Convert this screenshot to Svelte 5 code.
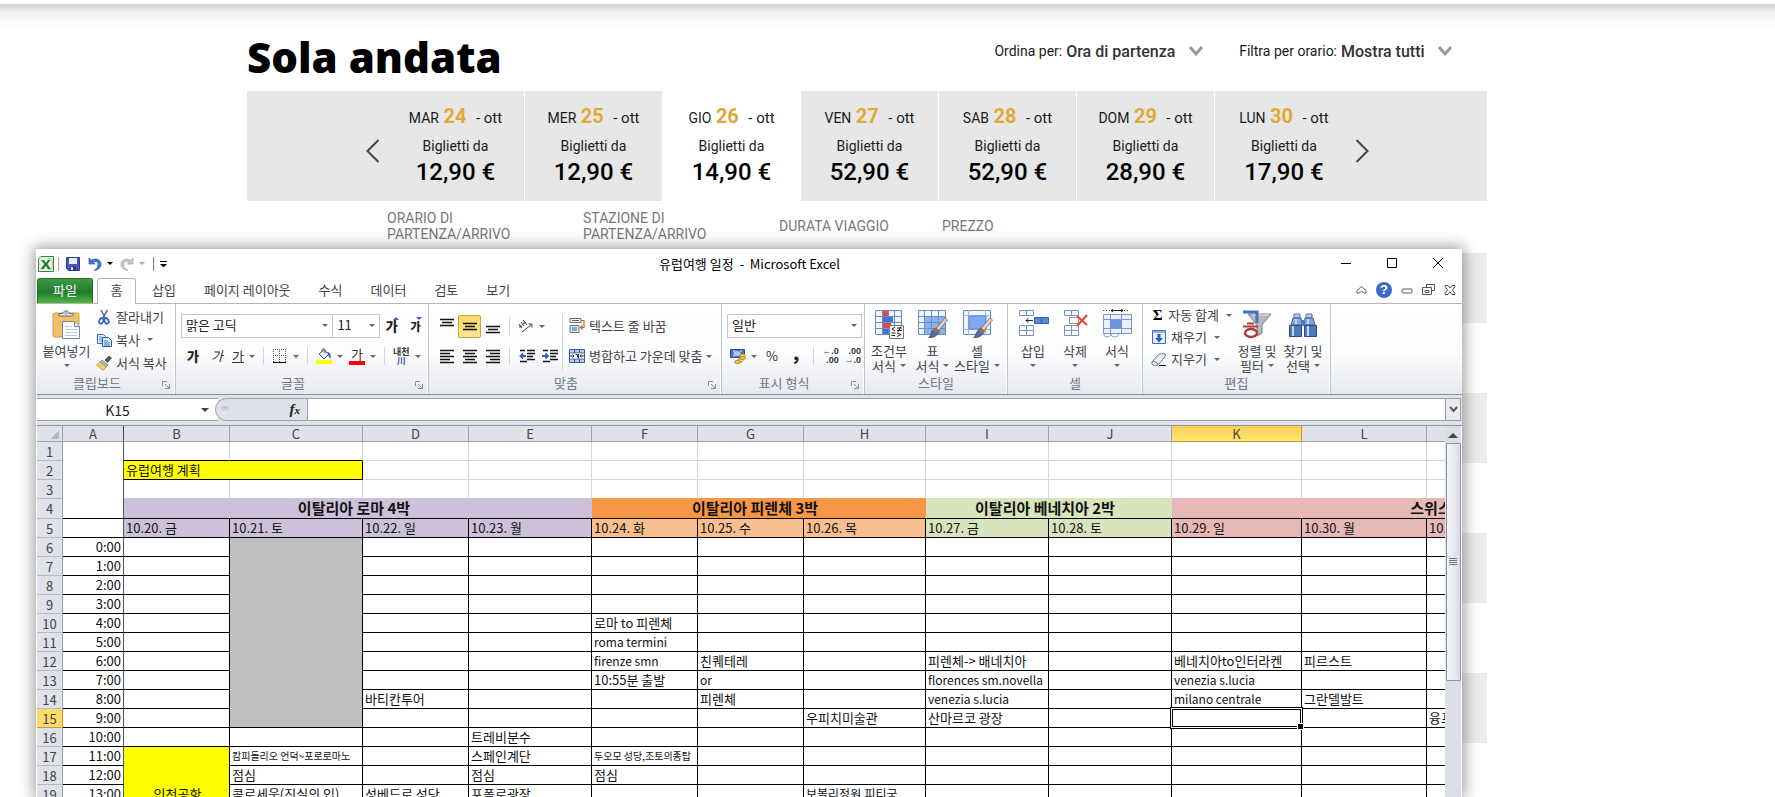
<script>
  const days = [
    { name: 'MAR', num: 24, price: '12,90 €' },
    { name: 'MER', num: 25, price: '12,90 €' },
    { name: 'GIO', num: 26, price: '14,90 €', active: true },
    { name: 'VEN', num: 27, price: '52,90 €' },
    { name: 'SAB', num: 28, price: '52,90 €' },
    { name: 'DOM', num: 29, price: '28,90 €' },
    { name: 'LUN', num: 30, price: '17,90 €' }
  ];

  const tabs = ['삽입', '페이지 레이아웃', '수식', '데이터', '검토', '보기'];

  const columns = [
    ['A', 61], ['B', 106], ['C', 133], ['D', 106], ['E', 123], ['F', 106], ['G', 106],
    ['H', 122], ['I', 123], ['J', 123], ['K', 130], ['L', 125], ['M', 271]
  ];
  const letters = columns.map((c) => c[0]).slice(1);

  const zone = (c) => ('BCDE'.includes(c) ? 'rome' : 'FGH'.includes(c) ? 'florence' : 'IJ'.includes(c) ? 'venice' : 'swiss');

  const dates = {
    B: '10.20. 금', C: '10.21. 토', D: '10.22. 일', E: '10.23. 월', F: '10.24. 화', G: '10.25. 수',
    H: '10.26. 목', I: '10.27. 금', J: '10.28. 토', K: '10.29. 일', L: '10.30. 월', M: '10.31. 화'
  };

  const notes = {
    F10: '로마 to 피렌체', F11: 'roma termini', F12: 'firenze smn', F13: '10:55분 출발',
    G12: '친퀘테레', G13: 'or', G14: '피렌체',
    I12: '피렌체-> 배네치아', I13: 'florences sm.novella', I14: 'venezia s.lucia', I15: '산마르코 광장',
    K12: '베네치아to인터라켄', K13: 'venezia s.lucia', K14: 'milano centrale',
    L12: '피르스트', L14: '그란델발트', M15: '융프라우',
    D14: '바티칸투어', H15: '우피치미술관',
    E16: '트레비분수', E17: '스페인계단', E18: '점심', E19: '포폴로광장',
    C17: '캄피돌리오 언덕~포로로마노', C18: '점심', C19: '콜로세움(진실의 입)',
    D19: '성베드로 성당', F17: '두오모 성당,조토의종탑', F18: '점심', H19: '보볼리정원,피티궁'
  };
  const shrunk = ['C17', 'F17'];
  const condensed = ['H19', 'F11', 'F12', 'G13', 'I13', 'I14', 'K13', 'K14'];

  const hours = Array.from({ length: 16 }, (_, i) => i + 6);

  // Grey block covers C6:C15, yellow block covers B17:B21.
  const covered = (c, r) => (c === 'C' && r > 6 && r < 16) || (c === 'B' && r > 17);
</script>

{#snippet icon(name, size = 16)}
  <svg class="icon" width={size} height={size} viewBox="0 0 {size} {size}" aria-hidden="true">
    {#if name === 'excel'}
      <path d="M3 .5h12.5v15H.5V3z" fill="#e4f3df" stroke="#2c8a3c" />
      <path d="M10 3h4v10h-4z" fill="#fff" stroke="#7fbf86" stroke-width=".7" />
      <path d="M3 4h3l2 3 2-3h2.6L9.3 8l3.6 5H10L7.8 9.8 5.6 13H2.6l3.8-5z" fill="#1e7c34" />
    {:else if name === 'save'}
      <path d="M1.5 1.5h13v13h-11l-2-2z" fill="#4a55b5" stroke="#2f3992" />
      <path d="M4 2h8v6H4z" fill="#e8edfb" /><path d="M5 10.500h6v4H5z" fill="#2c3480" /><path d="M6 11h2v3H6z" fill="#dfe5f7" />
    {:else if name === 'undo'}
      <path d="M2 2v6h6L6 6.200C9 4.500 11 6 11 8.500S9.500 13 7 14.500C12 14 14 11 14 8.200 14 3.500 8.500 1.500 4.200 4.300z" fill="#4a72cf" stroke="#2d51a8" stroke-width=".7" />
    {:else if name === 'redo'}
      <path d="M14 2v6H8l2-1.800C7 4.500 5 6 5 8.500S6.500 13 9 14.500C4 14 2 11 2 8.200 2 3.500 7.500 1.500 11.800 4.300z" fill="#c6c8cc" stroke="#a2a5aa" stroke-width=".7" />
    {:else if name === 'cut'}
      <path d="M5 1l4.500 8.500M11.500 1L6.500 9.500" stroke="#5c708f" stroke-width="1.600" fill="none" />
      <ellipse cx="5.300" cy="12" rx="2" ry="2.800" transform="rotate(25 5.300 12)" fill="none" stroke="#2f62b8" stroke-width="1.700" />
      <ellipse cx="10.500" cy="12" rx="2" ry="2.800" transform="rotate(-25 10.500 12)" fill="none" stroke="#2f62b8" stroke-width="1.700" />
    {:else if name === 'copy'}
      <path d="M1.500 2.500h6l2 2v7h-8z" fill="#eaf2fd" stroke="#3b6ab5" /><path d="M3 5h3M3 7h4M3 9h4" stroke="#5c8bd0" />
      <path d="M6.500 5.500h6l3 3v6h-9z" fill="#dceafc" stroke="#2a56a2" /><path d="M8 9h4M8 11h6M8 13h6" stroke="#3f72c2" />
    {:else if name === 'brush'}
      <path d="M9 5l4-4 2.500 2-4 4.500z" fill="#5e5247" stroke="#3f352d" stroke-width=".6" />
      <path d="M6 5l6 5-2 2-6-5z" fill="#a9b6cb" stroke="#66748c" stroke-width=".6" />
      <path d="M4 7l6 5-3 3.500L.500 10z" fill="#f3cf6a" stroke="#b98b2b" stroke-width=".8" />
    {:else if name === 'border'}
      <path d="M1.500 1v13M7.500 1v13M13.500 1v13M1 1.500h13M1 7.500h13" stroke="#555" stroke-dasharray="1 1" fill="none" />
      <path d="M1 14.500h13" stroke="#000" />
    {:else if name === 'fill'}
      <path d="M3 6l5-4 5 4-5 5z" fill="#e4eaf3" stroke="#4a5a74" /><path d="M6 4V1.500c1-1.500 3-1 3 .500v3" fill="none" stroke="#4a5a74" />
      <path d="M11 4c4 0 4 4 3.500 7-1-1-2-3-2.500-5z" fill="#2f62c0" /><path d="M0 12h16v4H0z" fill="#ff0" />
    {:else if name === 'wrap'}
      <path d="M1 .500h11v4H1z" fill="#fff" stroke="#666" /><path d="M3 2.500h7" stroke="#555" />
      <path d="M1 7.500h9v7H1z" fill="#dbe7f8" stroke="#5476ad" /><path d="M3 10h5M3 12h5" stroke="#4c5f80" />
      <path d="M12 2.500h3v7h-3M13.500 7.500l-2 2 2 2" fill="none" stroke="#c06722" stroke-width="1.200" />
    {:else if name === 'merge'}
      <path d="M.500 1.500h15v13H.500z" fill="#b9cdec" stroke="#3d5a8d" /><path d="M.500 5h15M.500 11h15M5.500 1v4M10.500 1v4M5.500 11v4M10.500 11v4" stroke="#3d5a8d" />
      <path d="M1 5.500h14v5H1z" fill="#fff" /><path d="M1 8h4M11 8h4M3.500 6.500L5 8 3.500 9.500M12.500 6.500L11 8l1.500 1.500M6.500 6.500h2v3M9.500 6v4.500" stroke="#333" fill="none" />
    {:else if name === 'orient'}
      <path d="M1 6l3 4M3 4l3 4M5 2l4 5M1 9l3-1M5 5.500l3-1" stroke="#555" fill="none" stroke-width="1.200" />
      <path d="M4 14L13.500 6.500M10.500 6h3.500v3.500" stroke="#444" fill="none" />
    {:else if name === 'outdent' || name === 'indent'}
      <path d="M8 2.500h8M8 5.500h8M8 8.500h6M8 11.500h8M1 2.500h5M1 13.500h7" stroke="#111" stroke-width="1.500" />
      <path d={name === 'outdent' ? 'M7 8H2M4 5.500L1.500 8 4 10.500' : 'M0 8h5M3.500 5.500L6 8 3.500 10.500'} stroke="#2f62c0" stroke-width="1.800" fill="none" />
    {:else if name === 'money'}
      <path d="M.500 1.500h14v8H.500z" fill="#4a74c4" stroke="#274a90" /><ellipse cx="7" cy="5.500" rx="3.500" ry="2.500" fill="#b6cbf2" />
      <path d="M3 3h2M10 3h2M3 8h2" stroke="#dde8fb" />
      <ellipse cx="12.500" cy="7.500" rx="3" ry="1.500" fill="#ffe07a" stroke="#a47614" stroke-width=".8" /><ellipse cx="12.500" cy="10" rx="3" ry="1.500" fill="#f7cc4c" stroke="#a47614" stroke-width=".8" />
      <ellipse cx="10" cy="12.500" rx="3" ry="1.500" fill="#ffe07a" stroke="#a47614" stroke-width=".8" /><ellipse cx="7.500" cy="14" rx="3" ry="1.500" fill="#f7cc4c" stroke="#a47614" stroke-width=".8" />
    {:else if name === 'down'}
      <path d="M1.500 1.500h13v13h-13z" fill="#e8f1fd" stroke="#3f6db5" /><path d="M2 2h12v2H2z" fill="#8fb2e6" />
      <path d="M6.500 5h3v4H12l-4 4.500L4 9h2.500z" fill="#2c5fc4" />
    {:else if name === 'eraser'}
      <path d="M1 11l6-7c1-1 6-2 7-1s0 3-1 4l-6 7c-3 1-7 0-6-3z" fill="#edf1f7" stroke="#667288" /><path d="M1 11c2-1 5 0 6 3" fill="none" stroke="#667288" /><path d="M8 14.500h7" stroke="#000" />
    {:else if name === 'paste'}
      <path d="M3 4h23a2 2 0 0 1 2 2v22H3a2 2 0 0 1-1-2V6a2 2 0 0 1 1-2z" fill="#f3c06a" stroke="#cf9a48" />
      <path d="M8 7V4.500h4C12 1 18 1 18 4.500h4V7z" fill="#e1e5ea" stroke="#656e7a" /><circle cx="15" cy="4" r="1.200" fill="#fff" stroke="#656e7a" stroke-width=".7" />
      <path d="M11.500 12.500h12l5 5v12h-17z" fill="#fff" stroke="#7287ad" /><path d="M23.500 12.500v5h5" fill="#dae5f5" stroke="#7287ad" />
      <path d="M14 17.500h7M14 20.500h12M14 23.500h12M14 26.500h12" stroke="#b8c6de" />
    {:else if name === 'cond'}
      <path d="M1.500 1.500h26v24h-26z" fill="#eef3fb" stroke="#6a8cc2" /><path d="M1 7.500h27M1 13.500h27M1 19.500h27M8.500 1v25M14.500 1v25M20.500 1v25" stroke="#6a8cc2" />
      <path d="M9 2h5v5H9z M9 14h8v5H9z" fill="#e8483c" /><path d="M9 8h10v5H9zM9 20h5v5H9z" fill="#3f74e0" />
      <path d="M15.500 16.500h14v13h-14z" fill="#fafafa" stroke="#777" /><path d="M21 18l-3 2 3 2M17.500 24h4M23 19h5M23 21.500h5M27 17.500l-3 5.500M23 24l4 1.500-4 2M17.500 26.500h3.500" fill="none" stroke="#222" />
    {:else if name === 'tablestyle' || name === 'cellstyle'}
      <path d="M1.500 1.500h27v24h-27z" fill="#f0f5fd" stroke="#6a8cc2" />
      {#if name === 'tablestyle'}
        <path d="M8 8h20v17H8z" fill="#8db1ec" /><path d="M1 7.500h27M1 13.500h27M1 19.500h27M7.500 1v25M14.500 1v25M21.500 1v25" stroke="#6a8cc2" />
      {:else}
        <path d="M1 6.500h27M1 20.500h27M6.500 1v25M23.500 1v25" stroke="#9cb6de" /><path d="M7 7h17v13H7z" fill="#7fa9f0" stroke="#5a86d0" />
      {/if}
      <path d="M28 9l2.500 2-9 11-3-2z" fill="#d9d3cb" stroke="#6f665d" stroke-width=".8" /><path d="M19 19l3.500 3c-2 5-6 7-11 6.500 3-2 3-8 7.500-9.500z" fill="#3f6fb5" stroke="#6b4a2a" stroke-width=".8" /><path d="M19 19l3.500 3-2 2.500-4-3z" fill="#a8713d" />
    {:else if name === 'insert'}
      <path d="M1.500 1.500h14v5h-14zM1.500 16.500h14v10h-14zM8.500 1v6M8.500 16v11M1 21.500h15" fill="#f6f9fe" stroke="#7a93bd" />
      <path d="M16.500 8.500h14v6h-14z" fill="#5b87dd" stroke="#3560b0" /><path d="M23.500 8v7" stroke="#3560b0" /><path d="M15 11.500H8M10.500 9L8 11.500l2.500 2.500" fill="none" stroke="#222" />
    {:else if name === 'delete'}
      <path d="M4.500 1.500h14v5h-14zM4.500 16.500h14v10h-14zM11.500 1v6M11.500 16v11M4 21.500h15" fill="#f6f9fe" stroke="#7a93bd" />
      <path d="M9.500 8.500h9v6h-9z" fill="none" stroke="#333" stroke-dasharray="1 1" /><path d="M17 7l10 9M27 6L17 17" stroke="#e8452e" stroke-width="2" />
    {:else if name === 'format'}
      <path d="M1 1.500h26" stroke="#444" stroke-dasharray="1 2" /><path d="M9 1.500h12M11 0L9 1.500 11 3M19 0l2 1.500L19 3" stroke="#222" fill="none" />
      <path d="M1.500 5.500h28v19h-28z" fill="#e9f1fc" stroke="#7a97c8" /><path d="M1 10.500h29M1 19.500h29M8.500 5v20M19.500 5v20" stroke="#7a97c8" /><path d="M9 11h10v8H9z" fill="#6795e6" /><path d="M2 25c0 4 6 4 7 0 0 4 7 4 8 0" fill="#f4f8fe" stroke="#8096b8" />
    {:else if name === 'sort'}
      <path d="M6 5h23l-9 11v8l-5 3V16z" fill="#b5b9bd" stroke="#7c8288" /><path d="M10 6h17" stroke="#e9ebee" />
      <path d="M1 3h14v11" fill="none" stroke="#4a70c0" stroke-width="3" /><path d="M1 17.500h15M5 14.500h7" stroke="#b03a3a" stroke-width="2" /><ellipse cx="9" cy="24" rx="6" ry="4" fill="none" stroke="#b03a3a" stroke-width="2.500" />
    {:else if name === 'find'}
      <path d="M6 5h6v4H6zM18 5h6v4h-6z" fill="#b7cbea" stroke="#5877ab" />
      <path d="M5 9h8l1 7H3zM17 9h8l2 7H16z" fill="#86a5d8" stroke="#3d5c91" /><path d="M13 11h4v6h-4z" fill="#5878b0" />
      <path d="M1.500 16.500h12v11h-12zM16.500 16.500h12v11h-12z" fill="#4f78bd" stroke="#2d4c82" />
      <path d="M5 17v10M20 17v10M8 10v5M20 10v5" stroke="#c6d8f4" stroke-width="2" />
    {:else if name === 'launcher'}
      <path d="M1.500 6V1.500H6M4 4l4 4M8.500 4v4.500H4" fill="none" stroke="#8a9099" />
    {/if}
  </svg>
{/snippet}

{#snippet caret()}<span class="caret"></span>{/snippet}

{#snippet lines(kind, box = '')}
  <button class="tool {box}" type="button" aria-label={kind}>
    <svg width="14" height="16" viewBox="0 0 14 16" aria-hidden="true">
      {#if kind === 'top'}<path d="M0 1.500h14M2 4.500h10M0 7.500h14" />
      {:else if kind === 'middle'}<path d="M0 5.500h14M2 8.500h10M0 11.500h14" />
      {:else if kind === 'bottom'}<path d="M0 8.500h14M2 11.500h10M0 14.500h14" />
      {:else if kind === 'left'}<path d="M0 2.500h14M0 5.500h10M0 8.500h14M0 11.500h10M0 14.500h14" />
      {:else if kind === 'center'}<path d="M0 2.500h14M2 5.500h10M0 8.500h14M2 11.500h10M0 14.500h14" />
      {:else}<path d="M0 2.500h14M4 5.500h10M0 8.500h14M4 11.500h10M0 14.500h14" />{/if}
    </svg>
  </button>
{/snippet}

{#snippet big(name, first, second, drop = true)}
  <button class="big" type="button">
    {@render icon(name, 31)}
    <span>{first}</span>
    <span class="second">{second}{#if drop}{@render caret()}{/if}</span>
  </button>
{/snippet}

<div class="page">
  <div class="topshade"></div>
  <main>
    <header class="heading">
      <h1>Sola andata</h1>
      <div class="filters">
        <label>Ordina per:
          <select><option>Ora di partenza</option></select>
          <svg width="16" height="12" viewBox="0 0 16 12" aria-hidden="true"><path d="M2 2l6 7 6-7" /></svg>
        </label>
        <label>Filtra per orario:
          <select><option>Mostra tutti</option></select>
          <svg width="16" height="12" viewBox="0 0 16 12" aria-hidden="true"><path d="M2 2l6 7 6-7" /></svg>
        </label>
      </div>
    </header>

    <section class="strip">
      <button class="arrow prev" type="button" aria-label="Indietro"><svg width="14" height="24" viewBox="0 0 14 24"><path d="M12.500 1L1.500 12l11 11" /></svg></button>
      {#each days as d}
        <button class="day" class:active={d.active} type="button">
          <span class="date">{d.name} <b>{d.num}</b> <i>- ott</i></span>
          <span class="from">Biglietti da</span>
          <strong>{d.price}</strong>
        </button>
      {/each}
      <button class="arrow next" type="button" aria-label="Avanti"><svg width="14" height="24" viewBox="0 0 14 24"><path d="M1.500 1l11 11-11 11" /></svg></button>
    </section>

    <div class="colheads">
      <span>ORARIO DI<br />PARTENZA/ARRIVO</span>
      <span>STAZIONE DI<br />PARTENZA/ARRIVO</span>
      <span>DURATA VIAGGIO</span>
      <span>PREZZO</span>
    </div>
    <div class="results">
      {#each [0, 1, 2, 3, 4, 5, 6, 7] as n (n)}<div class="result"></div>{/each}
    </div>
  </main>

  <section class="window">
    <div class="titlebar">
      <div class="quick">
        {@render icon('excel')}
        <span class="bar"></span>
        <button type="button" aria-label="저장">{@render icon('save')}</button>
        <button type="button" aria-label="실행 취소">{@render icon('undo')}{@render caret()}</button>
        <button class="faded" type="button" aria-label="다시 실행">{@render icon('redo')}{@render caret()}</button>
        <span class="bar dark"></span>
        <span class="custom"></span>
      </div>
      <h2>유럽여행 일정&nbsp; -&nbsp; Microsoft Excel</h2>
      <div class="winbtns">
        <button type="button" aria-label="최소화"><svg width="11" height="11"><path d="M0 5.500h10" /></svg></button>
        <button type="button" aria-label="최대화"><svg width="11" height="11"><path d="M.500.500h9v9h-9z" /></svg></button>
        <button type="button" aria-label="닫기"><svg width="11" height="11"><path d="M0 0l10 10M10 0L0 10" /></svg></button>
      </div>
    </div>

    <nav class="tabs">
      <button class="file" type="button">파일</button>
      <button class="current" type="button">홈</button>
      {#each tabs as t}<button type="button">{t}</button>{/each}
      <div class="tabtools">
        <svg width="11" height="10" viewBox="0 0 11 10"><path d="M1 5.500L5.500 1.500 10 5.500v2.500H7.500L5.500 6 3.500 8H1z" /></svg>
        <span class="help">?</span>
        <svg width="12" height="10" viewBox="0 0 12 10"><rect x="1" y="4" width="10" height="4" rx="1" /></svg>
        <svg width="13" height="12" viewBox="0 0 13 12"><path d="M4.500 3.500v-3h8v6h-3M.500 3.500h9v7h-9zM3 6.500h4v2H3z" /></svg>
        <svg width="12" height="12" viewBox="0 0 12 12"><path d="M1 1.500h3L6 4l2-2.500h3v1L8.500 6 11 9.500v1H8L6 8l-2 2.500H1v-1L3.500 6 1 2.500z" /></svg>
      </div>
    </nav>

    <div class="ribbon">
      <section class="group clip">
        <div class="body">
          {@render big('paste', '붙여넣기', '')}
          <div class="stack">
            <button type="button">{@render icon('cut')}잘라내기</button>
            <button type="button">{@render icon('copy')}복사{@render caret()}</button>
            <button type="button">{@render icon('brush')}서식 복사</button>
          </div>
        </div>
        <footer>클립보드{@render icon('launcher', 10)}</footer>
      </section>

      <section class="group font">
        <div class="body rows">
          <div class="row">
            <label class="combo name"><select aria-label="글꼴"><option>맑은 고딕</option></select>{@render caret()}</label>
            <label class="combo size"><select aria-label="크기"><option>11</option></select>{@render caret()}</label>
            <button class="tool grow" type="button"><b>가</b></button>
            <button class="tool shrink" type="button"><b>가</b></button>
          </div>
          <div class="row">
            <button class="tool" type="button"><b>가</b></button>
            <button class="tool" type="button"><em>가</em></button>
            <button class="tool drop" type="button"><u>가</u>{@render caret()}</button>
            <span class="sep"></span>
            <button class="tool drop" type="button" aria-label="테두리">{@render icon('border')}{@render caret()}</button>
            <span class="sep"></span>
            <button class="tool drop" type="button" aria-label="채우기 색">{@render icon('fill')}{@render caret()}</button>
            <button class="tool drop" type="button"><span class="red">가</span>{@render caret()}</button>
            <span class="sep"></span>
            <button class="tool drop" type="button"><span class="ruby">내천<i>川</i></span>{@render caret()}</button>
          </div>
        </div>
        <footer>글꼴{@render icon('launcher', 10)}</footer>
      </section>

      <section class="group align">
        <div class="body">
          <div class="rows">
            <div class="row">
              {@render lines('top')}{@render lines('middle', 'on')}{@render lines('bottom')}
              <span class="sep"></span>
              <button class="tool drop" type="button" aria-label="방향">{@render icon('orient')}{@render caret()}</button>
            </div>
            <div class="row">
              {@render lines('left')}{@render lines('center')}{@render lines('right')}
              <span class="sep"></span>
              <button class="tool" type="button" aria-label="내어쓰기">{@render icon('outdent')}</button>
              <button class="tool" type="button" aria-label="들여쓰기">{@render icon('indent')}</button>
            </div>
          </div>
          <span class="sep tall"></span>
          <div class="rows wide">
            <button class="row" type="button">{@render icon('wrap')}텍스트 줄 바꿈</button>
            <button class="row" type="button">{@render icon('merge')}병합하고 가운데 맞춤{@render caret()}</button>
          </div>
        </div>
        <footer>맞춤{@render icon('launcher', 10)}</footer>
      </section>

      <section class="group number">
        <div class="body rows">
          <div class="row">
            <label class="combo kind"><select aria-label="표시 형식"><option>일반</option></select>{@render caret()}</label>
          </div>
          <div class="row">
            <button class="tool drop" type="button" aria-label="회계">{@render icon('money')}{@render caret()}</button>
            <button class="tool wide" type="button">%</button>
            <button class="tool wide" type="button"><b class="comma">,</b></button>
            <span class="sep"></span>
            <button class="tool dec" type="button"><span><i>←</i>.0</span><span>.00</span></button>
            <button class="tool dec" type="button"><span>.00</span><span><i>→</i>.0</span></button>
          </div>
        </div>
        <footer>표시 형식{@render icon('launcher', 10)}</footer>
      </section>

      <section class="group styles">
        <div class="body">
          {@render big('cond', '조건부', '서식')}
          {@render big('tablestyle', '표', '서식')}
          {@render big('cellstyle', '셀', '스타일')}
        </div>
        <footer>스타일</footer>
      </section>

      <section class="group cells">
        <div class="body">
          {@render big('insert', '삽입', '')}
          {@render big('delete', '삭제', '')}
          {@render big('format', '서식', '')}
        </div>
        <footer>셀</footer>
      </section>

      <section class="group edit">
        <div class="body">
          <div class="stack">
            <button type="button"><b class="sigma">Σ</b>자동 합계{@render caret()}</button>
            <button type="button">{@render icon('down')}채우기{@render caret()}</button>
            <button type="button">{@render icon('eraser')}지우기{@render caret()}</button>
          </div>
          {@render big('sort', '정렬 및', '필터')}
          {@render big('find', '찾기 및', '선택')}
        </div>
        <footer>편집</footer>
      </section>
    </div>

    <div class="formula">
      <label class="namebox"><input aria-label="이름 상자" value="K15" />{@render caret()}</label>
      <div class="fx"><span class="knob"></span><em>f<small>x</small></em></div>
      <input class="entry" aria-label="수식 입력줄" value="" />
      <button class="expand" type="button" aria-label="확장"><svg width="9" height="7"><path d="M1 1l3.500 4L8 1" /></svg></button>
    </div>

    <div class="sheet">
      <div class="clipper">
        <table>
          <colgroup>
            <col style="width:26px" />
            {#each columns as c}<col style="width:{c[1]}px" />{/each}
          </colgroup>
          <thead>
            <tr>
              <th class="corner"></th>
              {#each columns as c}<th class:picked={c[0] === 'K'} class:freeze={c[0] === 'A'}>{c[0]}</th>{/each}
            </tr>
          </thead>
          <tbody>
            <tr>
              <th>1</th>
              <td class="a" rowspan="4"></td>
              {#each letters as c}<td class="soft" class:above={c === 'B' || c === 'C'}></td>{/each}
            </tr>
            <tr>
              <th>2</th>
              <td class="plan" colspan="2">유럽여행 계획</td>
              {#each letters.slice(2) as c}<td class="soft"></td>{/each}
            </tr>
            <tr>
              <th>3</th>
              {#each letters as c}<td class="soft edge-{zone(c)}"></td>{/each}
            </tr>
            <tr class="cities">
              <th>4</th>
              <td class="rome" colspan="4">이탈리아 로마 4박</td>
              <td class="florence strong" colspan="3">이탈리아 피렌체 3박</td>
              <td class="venice" colspan="2">이탈리아 베네치아 2박</td>
              <td class="swiss" colspan="3">스위스</td>
            </tr>
            <tr>
              <th>5</th>
              <td class="a"></td>
              {#each letters as c}<td class={zone(c)}>{dates[c]}</td>{/each}
            </tr>
            {#each hours as r}
              <tr>
                <th class:picked={r === 15}>{r}</th>
                <td class="a">{r - 6}:00</td>
                {#each letters as c}
                  {#if c === 'C' && r === 6}
                    <td class="grey" rowspan="10"></td>
                  {:else if c === 'B' && r === 17}
                    <td class="airport" rowspan="5">인천공항</td>
                  {:else if !covered(c, r)}
                    <td
                      class:small={shrunk.includes(c + r)}
                      class:mid={condensed.includes(c + r)}
                      class:selected={c === 'K' && r === 15}>{notes[c + r] ?? ''}</td>
                  {/if}
                {/each}
              </tr>
            {/each}
          </tbody>
        </table>
      </div>
      <div class="scroll">
        <span class="up"></span>
        <div class="thumb"><span></span></div>
      </div>
    </div>
  </section>
</div>

<style>
  :global(body) { margin: 0; background: #fff; overflow: hidden; }
  * { box-sizing: border-box; }
  button, select, input { font: inherit; color: inherit; border: 0; background: none; padding: 0; margin: 0; border-radius: 0; outline: 0; }
  select { appearance: none; }
  svg { display: block; flex: none; }

  .page { position: relative; height: 100vh; overflow: hidden; font-family: Roboto, sans-serif; color: #1b1b1b; }
  .topshade { height: 26px; margin-top: 4px; margin-bottom: -30px; background: linear-gradient(#d2d2d2, #eee 30%, #fafafa 65%, #fff); }
  main { position: relative; margin: 0 288px 0 247px; padding-top: 4px; }

  .heading { display: flex; justify-content: space-between; height: 87px; }
  h1 { margin: 0; padding-top: 24px; font: 800 42px/58px "Open Sans", sans-serif; color: #000; }
  .filters { display: flex; gap: 35px; padding: 35px 34px 0 0; }
  .filters label { display: flex; align-items: center; height: 24px; font-size: 14px; white-space: nowrap; }
  .filters select { font-size: 16px; font-weight: 500; color: #333; margin-left: 4px; }
  .filters svg { margin-left: 12px; }
  .filters path { fill: none; stroke: #999; stroke-width: 3; }

  .strip { display: flex; height: 110px; background: #e7e7e7; padding-left: 119px; }
  .arrow { width: 21px; padding-top: 10px; }
  .next { padding-left: 2px; }
  .arrow path { fill: none; stroke: #444; stroke-width: 2; }
  .day { width: 138px; display: flex; flex-direction: column; align-items: center; border-right: 1px solid #fff; padding-top: 11px; font-size: 14px; }
  .day:nth-of-type(8) { border-right: 0; }
  .active { background: #fff; }
  .date { line-height: 28px; white-space: pre; }
  .date b { font-size: 20px; color: #dfa93a; margin-left: 1px; }
  .date i { font-style: normal; font-size: 15px; margin-left: 6px; }
  .from { line-height: 24px; padding-top: 2px; }
  .day strong { font-weight: 500; font-size: 24px; line-height: 28px; color: #000; }

  .colheads { display: grid; grid-template-columns: 196px 196px 163px 1fr; align-items: center; height: 52px; padding: 0 0 2px 140px; font-size: 14px; line-height: 16px; color: #777; }
  .result { height: 70px; }
  .result:nth-child(odd) { background: #ececec; }

  .window {
    position: absolute; left: 36px; right: 313px; top: 249px; bottom: 0; overflow: visible;
    display: flex; flex-direction: column; padding-left: 1px; background: #fff; color: #444;
    box-shadow: 0 0 14px 2px rgba(0, 0, 0, .4);
    font: 13px/16px "Noto Sans CJK KR", sans-serif;
  }
  .caret { display: inline-block; flex: none; width: 0; border: 3px solid transparent; border-top-color: #666; border-bottom: 0; }

  .titlebar { display: grid; grid-template-columns: 1fr auto 1fr; align-items: center; height: 29px; flex: none; }
  .quick { display: flex; align-items: center; padding-left: 1px; }
  .quick button { display: flex; align-items: center; gap: 4px; margin-right: 6px; }
  .quick .caret { border-top-color: #000; }
  .quick .faded .caret { border-top-color: #aaa; }
  .bar { width: 1px; height: 14px; background: #aaa3b5; margin: 0 6px 0 4px; }
  .dark { background: #777; margin: 0 6px 0 2px; }
  .custom { width: 7px; border-top: 1px solid #000; padding-top: 2px; }
  .custom::after { content: ""; display: block; border: 3px solid transparent; border-top-color: #000; border-bottom: 0; }
  h2 { margin: 0; font: inherit; color: #000; }
  .winbtns { display: flex; justify-content: flex-end; gap: 35px; padding-right: 18px; }
  .winbtns path { fill: none; stroke: #000; }

  .tabs { display: flex; height: 26px; flex: none; border-bottom: 1px solid #b2b5ba; }
  .tabs button { height: 25px; padding: 0 14px 2px; }
  .tabs .file { width: 56px; margin-right: 4px; border: 1px solid #1c6f2c; border-bottom: 0; border-radius: 3px 3px 0 0; color: #fff; background: linear-gradient(#3f9a45, #1f7a2e 55%, #4fb83f); }
  .tabs .current { width: 39px; height: 26px; padding: 0 0 3px; margin-right: 2px; border: 1px solid #b2b5ba; border-bottom: 0; border-radius: 3px 3px 0 0; background: #fff; }
  .tabtools { margin-left: auto; display: flex; align-items: center; gap: 9px; padding: 0 6px 2px 0; }
  .tabtools svg { fill: #fff; stroke: #555; }
  .help { width: 16px; height: 16px; border-radius: 8px; background: #3d6cc4; color: #fff; font: 700 13px/16px "Liberation Sans", sans-serif; text-align: center; }

  .ribbon { display: flex; height: 91px; flex: none; background: linear-gradient(#fff, #fbfcfd 55%, #e6e9ee); border-bottom: 1px solid #8b9097; }
  .group { display: flex; flex-direction: column; border-right: 1px solid #bfc4cb; box-shadow: inset -1px 0 #fff; flex: none; }
  .clip { width: 139px; } .font { width: 253px; } .align { width: 293px; } .number { width: 143px; }
  .styles { width: 143px; } .cells { width: 135px; } .edit { width: 188px; }
  .body { display: flex; height: 71px; }
  footer { position: relative; display: flex; justify-content: center; height: 18px; line-height: 16px; color: #6e7885; }
  .clip footer, .font footer, .align footer, .number footer { padding-right: 18px; }
  footer .icon { position: absolute; right: 4px; bottom: 3px; }
  .big { display: flex; flex-direction: column; align-items: center; padding-top: 5px; white-space: nowrap; }
  .big span { line-height: 15px; }
  .big > span:first-of-type { margin-top: 3px; }
  .second { display: flex; align-items: center; justify-content: center; gap: 4px; height: 15px; }
  .stack { display: flex; flex-direction: column; padding-top: 1px; }
  .stack button { display: flex; align-items: center; height: 23px; gap: 4px; white-space: nowrap; }
  .stack .caret { margin-left: 3px; }
  .clip .big { width: 59px; }
  .edit .stack { width: 89px; padding: 0 0 0 8px; }
  .edit .stack button { height: 22px; }
  .edit .big { width: 46px; }
  .edit .big:first-of-type { width: 50px; }
  .edit .big:last-child { width: 42px; }
  .sigma { width: 16px; font: 700 15px/16px "Liberation Serif", serif; color: #000; text-align: center; }
  .styles .big { width: 39px; }
  .styles .big:first-child { width: 48px; }
  .styles .big:last-child { width: 50px; }
  .cells .body { padding-left: 4px; }
  .cells .big { width: 42px; }

  .rows { display: flex; flex-direction: column; gap: 6px; padding-top: 10px; }
  .row { display: flex; align-items: center; height: 24px; }
  .combo { display: flex; align-items: center; height: 24px; border: 1px solid #c3c7cd; background: #fff; color: #222; padding: 0 4px 2px 4px; }
  .combo select { flex: 1; min-width: 0; }
  .name { width: 153px; } .size { width: 47px; border-left: 0; } .kind { width: 135px; }
  .font .body, .number .body { padding-left: 5px; }
  .tool { display: flex; align-items: center; justify-content: center; width: 23px; height: 23px; color: #333; white-space: nowrap; }
  .font .tool { width: 24px; }
  .tool b { font-weight: 900; color: #222; }
  .tool svg:not(.icon) path { fill: none; stroke: #111; stroke-width: 1.500; }
  .drop, .font .drop { width: auto; gap: 5px; padding: 0 3px; }
  .sep { width: 1px; height: 18px; background: #d3d7dc; margin: 0 5px; }
  .tall { height: 56px; margin: 10px 6px 0 1px; }
  .shrink b { font-size: 11px; }
  .grow::after, .shrink::after { content: ""; align-self: flex-start; border: 3px solid transparent; border-top: 0; border-bottom-color: #2f5fb5; margin: 2px 0 0 -5px; }
  .shrink::after { border: 3px solid transparent; border-top-color: #2f5fb5; border-bottom: 0; }
  .red { width: 16px; line-height: 14px; border-bottom: 4px solid #f00; text-align: center; }
  .ruby { display: flex; flex-direction: column; font-size: 9px; line-height: 9px; font-weight: 700; align-items: center; }
  .ruby i { font-style: normal; color: #2f5fb5; }
  .align .body { padding-left: 6px; }
  .align .on { border: 1px solid #c7a045; border-radius: 2px; background: linear-gradient(#fbd66f, #fde88c); }
  .align .wide .row { gap: 4px; white-space: nowrap; }
  .number .wide { width: 25px; }
  .comma { font-size: 18px; line-height: 10px; padding-bottom: 8px; }
  .dec { flex-direction: column; align-items: flex-end; padding-right: 3px; font: 700 9px/9px "Liberation Sans", sans-serif; }
  .dec i { font-style: normal; color: #2f5fb5; }

  .formula { display: flex; height: 31px; flex: none; padding: 3px 1px 4px 0; background: #dfe2e8; border-bottom: 1px solid #8c929c; }
  .formula > * { border-top: 1px solid #9aa0aa; border-bottom: 1px solid #9aa0aa; }
  .namebox { display: flex; align-items: center; width: 181px; background: #fff; color: #222; }
  .namebox input { width: 161px; text-align: center; font-size: 14px; }
  .namebox .caret { margin-left: 3px; border-width: 4px; border-bottom-width: 0; border-top-color: #444; }
  .fx { display: flex; align-items: center; justify-content: space-between; width: 93px; margin-left: -3px; border-left: 1px solid #9aa0aa; border-radius: 12px 0 0 12px; background: #dfe2e8; padding: 0 7px 0 5px; border-right: 1px solid #9aa0aa; }
  .knob { width: 8px; height: 8px; border-radius: 4px; background: linear-gradient(#b7bcc5, #f0f2f5); }
  .fx em { font: italic 700 15px/20px "Liberation Serif", serif; color: #222; }
  .fx small { font-size: 11px; }
  .entry { flex: 1; background: #fff; min-width: 0; }
  .expand { width: 16px; background: #e9ebef; border: 1px solid #9aa0aa; display: flex; align-items: center; justify-content: center; }
  .expand path { fill: none; stroke: #555; stroke-width: 2; }

  .sheet { flex: 1; min-height: 0; display: flex; padding-right: 1px; }
  .clipper { flex: 1; min-width: 0; overflow: hidden; }
  table { width: 1661px; table-layout: fixed; border-collapse: separate; border-spacing: 0; }
  th { height: 19px; padding: 0; font-weight: 400; line-height: 15px; text-align: center; color: #444; background: #dfe2e8; border-right: 1px solid #9da3ad; border-bottom: 1px solid #b4b9c2; }
  thead th { height: 16px; line-height: 14px; border-bottom-color: #9da3ad; }
  .corner { background: linear-gradient(135deg, transparent 50%, #b3b8c1 50%) no-repeat 13px 4px / 9px 9px, #dfe2e8; }
  thead .freeze { border-right-color: #444; }
  th.picked { background: #fddc6b; border-color: #c9963a; }
  thead th.picked { background: linear-gradient(#fbcf5a, #fee56f); }
  td { height: 19px; padding: 0 0 2px 2px; line-height: 15px; color: #111; white-space: nowrap; border-right: 1px solid #000; border-bottom: 1px solid #000; }
  td.a { text-align: right; padding-right: 2px; border-right-color: #555; }
  td.soft { border-color: #d5d7db; }
  td.above { border-bottom-color: #000; }
  td.plan { background: #ff0; }
  td.edge-rome { border-bottom-color: #ccc0da; } td.edge-florence { border-bottom-color: #f79646; }
  td.edge-venice { border-bottom-color: #d8e4bc; } td.edge-swiss { border-bottom-color: #e6b8b7; }
  .rome { background: #ccc0da; } .florence { background: #fabf8f; } .venice { background: #d8e4bc; } .swiss { background: #e6b8b7; }
  .florence.strong { background: #f79646; }
  .cities td { height: 20px; padding: 0 8px 2px 0; border-right: 0; text-align: center; font-size: 15px; font-weight: 700; line-height: 17px; }
  .cities th { height: 20px; }
  .grey { background: #bfbfbf; }
  .airport { background: #ff0; text-align: center; vertical-align: middle; }
  .small { font-size: 10px; } .mid { font-size: 12px; }
  .selected { position: relative; }
  .selected::before { content: ""; position: absolute; inset: -2px; border: 3px double #000; background: #fff; z-index: 1; }
  .selected::after { content: ""; position: absolute; right: -3px; bottom: -3px; width: 5px; height: 5px; background: #000; border: 1px solid #fff; z-index: 2; }

  .scroll { width: 16px; display: flex; flex-direction: column; align-items: center; background: #dadfe6; }
  .up { margin: 7px 0 5px; border: 5px solid transparent; border-top: 0; border-bottom-color: #444; }
  .thumb { width: 15px; height: 238px; border: 1px solid #8c929c; border-radius: 1px; background: linear-gradient(90deg, #f4f5f8, #d8dce3); display: flex; align-items: center; justify-content: center; }
  .thumb span { width: 8px; height: 8px; background: repeating-linear-gradient(#6f7580 0 1px, transparent 1px 2px); }
</style>
